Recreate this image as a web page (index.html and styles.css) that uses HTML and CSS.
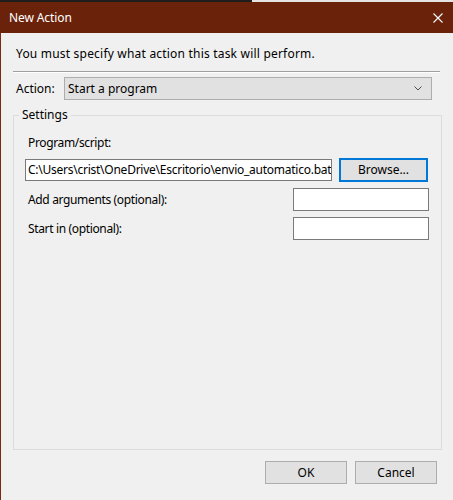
FILE: index.html
```html
<!DOCTYPE html>
<html>
<head>
<meta charset="utf-8">
<link rel="stylesheet" href="styles.css">
</head>
<body>
<div class="window">
  <div class="topstrip"><div class="strip-dark"></div><div class="strip-light"></div></div>
  <div class="titlebar">
    <span class="title">New Action</span>
    <svg class="close" width="10" height="10" viewBox="0 0 10 10"><path d="M0.5 0.5 L9.5 9.5 M9.5 0.5 L0.5 9.5" stroke="#fff" stroke-width="1.1" fill="none"/></svg>
  </div>
  <div class="body">
    <div class="message">You must specify what action this task will perform.</div>
    <div class="separator"></div>
    <div class="action-row">
      <span class="action-label">Action:</span>
      <div class="combo">
        <span>Start a program</span>
        <svg class="chevron" width="8" height="5" viewBox="0 0 8 5"><path d="M0.5 0.5 L4 4 L7.5 0.5" stroke="#505050" stroke-width="1" fill="none"/></svg>
      </div>
    </div>
    <fieldset class="group">
      <legend>Settings</legend>
      <div class="field-label">Program/script:</div>
      <div class="program-row">
        <div class="textbox program">C:\Users\crist\OneDrive\Escritorio\envio_automatico.bat</div>
        <div class="button browse">Browse...</div>
      </div>
      <div class="opt-row">
        <span class="field-label">Add arguments (optional):</span>
        <div class="textbox small"></div>
      </div>
      <div class="opt-row">
        <span class="field-label">Start in (optional):</span>
        <div class="textbox small"></div>
      </div>
    </fieldset>
    <div class="footer">
      <div class="button dlg">OK</div>
      <div class="button dlg">Cancel</div>
    </div>
  </div>
</div>
</body>
</html>
```
FILE: styles.css
```css
html, body {
  margin: 0;
  padding: 0;
}
body {
  font-family: "Noto Sans", "Open Sans", sans-serif;
  font-size: 12px;
  line-height: 16px;
  color: #000;
  background: #f0f0f0;
}
.window {
  width: 453px;
  height: 500px;
  display: flex;
  flex-direction: column;
}
.topstrip {
  height: 2px;
  display: flex;
}
.strip-dark {
  width: 252px;
  background: #1e1e1e;
}
.strip-light {
  flex: 1;
  background: #e4e4e4;
}
.titlebar {
  height: 31px;
  background: #6b220a;
  color: #fff;
  display: flex;
  align-items: center;
  justify-content: space-between;
  padding: 0 10px 0 9px;
}
.title {
  letter-spacing: -0.1px;
}
.close {
  display: block;
}
.body {
  flex: 1;
  border-left: 1px solid #7a2a12;
  background: #f0f0f0;
  display: flex;
  flex-direction: column;
  min-height: 0;
}
.message {
  margin: 13px 0 0 15px;
  letter-spacing: 0.2px;
}
.separator {
  margin: 9px 0 0 12px;
  width: 427px;
  height: 0;
  border-top: 1px solid #a0a0a0;
  border-bottom: 1px solid #ffffff;
}
.action-row {
  margin: 4px 0 0 15px;
  display: flex;
  align-items: center;
}
.action-label {
  width: 48px;
}
.combo {
  box-sizing: border-box;
  width: 368px;
  height: 23px;
  background: #e1e1e1;
  border: 1px solid #adadad;
  display: flex;
  align-items: center;
  justify-content: space-between;
  padding: 0 9px 0 3px;
}
.chevron {
  display: block;
}
.group {
  flex: 1;
  margin: 7px 0 0 12px;
  width: 429px;
  box-sizing: border-box;
  border: 1px solid #dcdcdc;
  padding: 12px 12px 0 11px;
  min-height: 0;
}
.group legend {
  margin-left: -6px;
  padding: 0 3px;
}
.field-label {
  padding-left: 3px;
  letter-spacing: -0.35px;
}
.program-row {
  margin-top: 7px;
  display: flex;
  align-items: center;
}
.textbox {
  box-sizing: border-box;
  background: #fff;
  border: 1px solid #7a7a7a;
  height: 22px;
  white-space: nowrap;
  overflow: hidden;
}
.textbox.program {
  width: 307px;
  padding: 2px 0 0 2px;
  letter-spacing: -0.25px;
}
.button {
  box-sizing: border-box;
  background: #e1e1e1;
  border: 1px solid #adadad;
  display: flex;
  align-items: center;
  justify-content: center;
}
.browse {
  margin-left: 7px;
  width: 89px;
  height: 24px;
  border: 2px solid #0078d7;
}
.opt-row {
  margin-top: 6px;
  display: flex;
  align-items: center;
  justify-content: space-between;
}
.textbox.small {
  width: 136px;
  height: 23px;
}
.footer {
  display: flex;
  justify-content: flex-end;
  gap: 8px;
  padding: 11px 16px 16px 0;
}
.dlg {
  width: 82px;
  height: 23px;
}
```
